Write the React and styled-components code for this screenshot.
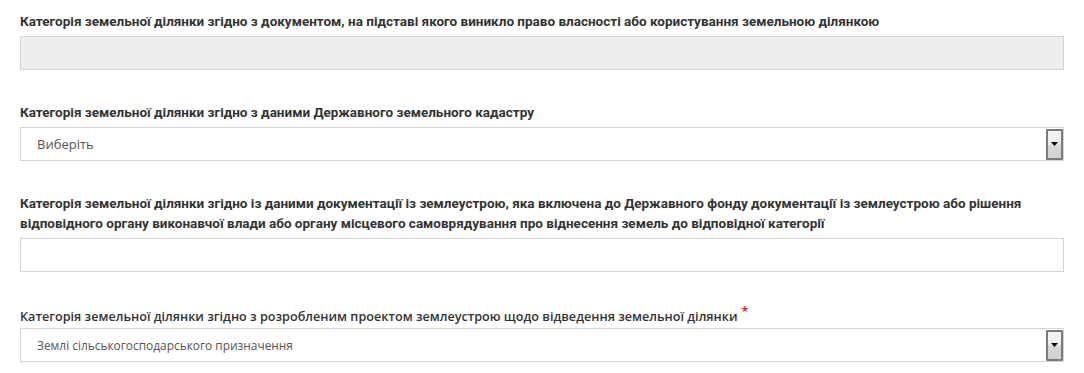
import React from 'react'
import styled, { createGlobalStyle } from 'styled-components'

const GlobalStyle = createGlobalStyle`
  html, body {
    margin: 0;
    padding: 0;
    background: #ffffff;
  }
`

const Form = styled.div`
  display: flex;
  flex-direction: column;
  gap: 32px;
  padding: 11px 20px 0 20px;
`

const Field = styled.div`
  display: flex;
  flex-direction: column;
  ${(p) => p.$spaced && 'margin-top: 2px;'}
`

const Label = styled.div`
  font-family: Roboto, "Liberation Sans", sans-serif;
  font-weight: 700;
  font-size: 13.5px;
  line-height: 20px;
  color: #333333;
  margin-bottom: 5px;
  ${(p) => p.$alt && `
    font-family: "Open Sans", "Liberation Sans", sans-serif;
    font-weight: 600;
    font-size: 12.65px;
    margin-bottom: 2px;
  `}
`

const Required = styled.span`
  color: #e4161b;
  margin-left: 4px;
  position: relative;
  top: -5px;
`

const TextBox = styled.div`
  height: 34px;
  box-sizing: border-box;
  border: 1px solid #d2d5dd;
  background: ${(p) => (p.$disabled ? '#eeeeee' : '#ffffff')};
`

const SelectBox = styled.div`
  height: 34px;
  box-sizing: border-box;
  border: 1px solid #d2d5dd;
  background: #ffffff;
  display: flex;
  align-items: center;
  padding: 0 0 0 16px;
`

const SelectValue = styled.span`
  flex: 1;
  font-family: "Open Sans", "Liberation Sans", sans-serif;
  font-size: ${(p) => (p.$small ? '11.9px' : '13px')};
  color: #555555;
`

const ArrowButton = styled.span`
  width: 17px;
  height: 31px;
  box-sizing: border-box;
  border: 2px solid #7a7a7a;
  border-radius: 1px;
  background: linear-gradient(#f4f4f4 0%, #ececec 45%, #d6d6d6 55%, #d2d2d2 100%);
  display: flex;
  align-items: center;
  justify-content: center;
`

const Arrow = () => (
  <svg width="7" height="4" viewBox="0 0 7 4">
    <path d="M0 0h7L3.5 4z" fill="#000" />
  </svg>
)

const Select = ({ value, small }) => (
  <SelectBox>
    <SelectValue $small={small}>{value}</SelectValue>
    <ArrowButton><Arrow /></ArrowButton>
  </SelectBox>
)

export default function App() {
  return (
    <>
      <GlobalStyle />
      <Form>
        <Field>
          <Label>Категорія земельної ділянки згідно з документом, на підставі якого виникло право власності або користування земельною ділянкою</Label>
          <TextBox $disabled />
        </Field>
        <Field>
          <Label>Категорія земельної ділянки згідно з даними Державного земельного кадастру</Label>
          <Select value="Виберіть" />
        </Field>
        <Field>
          <Label>Категорія земельної ділянки згідно із даними документації із землеустрою, яка включена до Державного фонду документації із землеустрою або рішення відповідного органу виконавчої влади або органу місцевого самоврядування про віднесення земель до відповідної категорії</Label>
          <TextBox />
        </Field>
        <Field $spaced>
          <Label $alt>Категорія земельної ділянки згідно з розробленим проектом землеустрою щодо відведення земельної ділянки<Required>*</Required></Label>
          <Select value="Землі сільськогосподарського призначення" small />
        </Field>
      </Form>
    </>
  )
}
